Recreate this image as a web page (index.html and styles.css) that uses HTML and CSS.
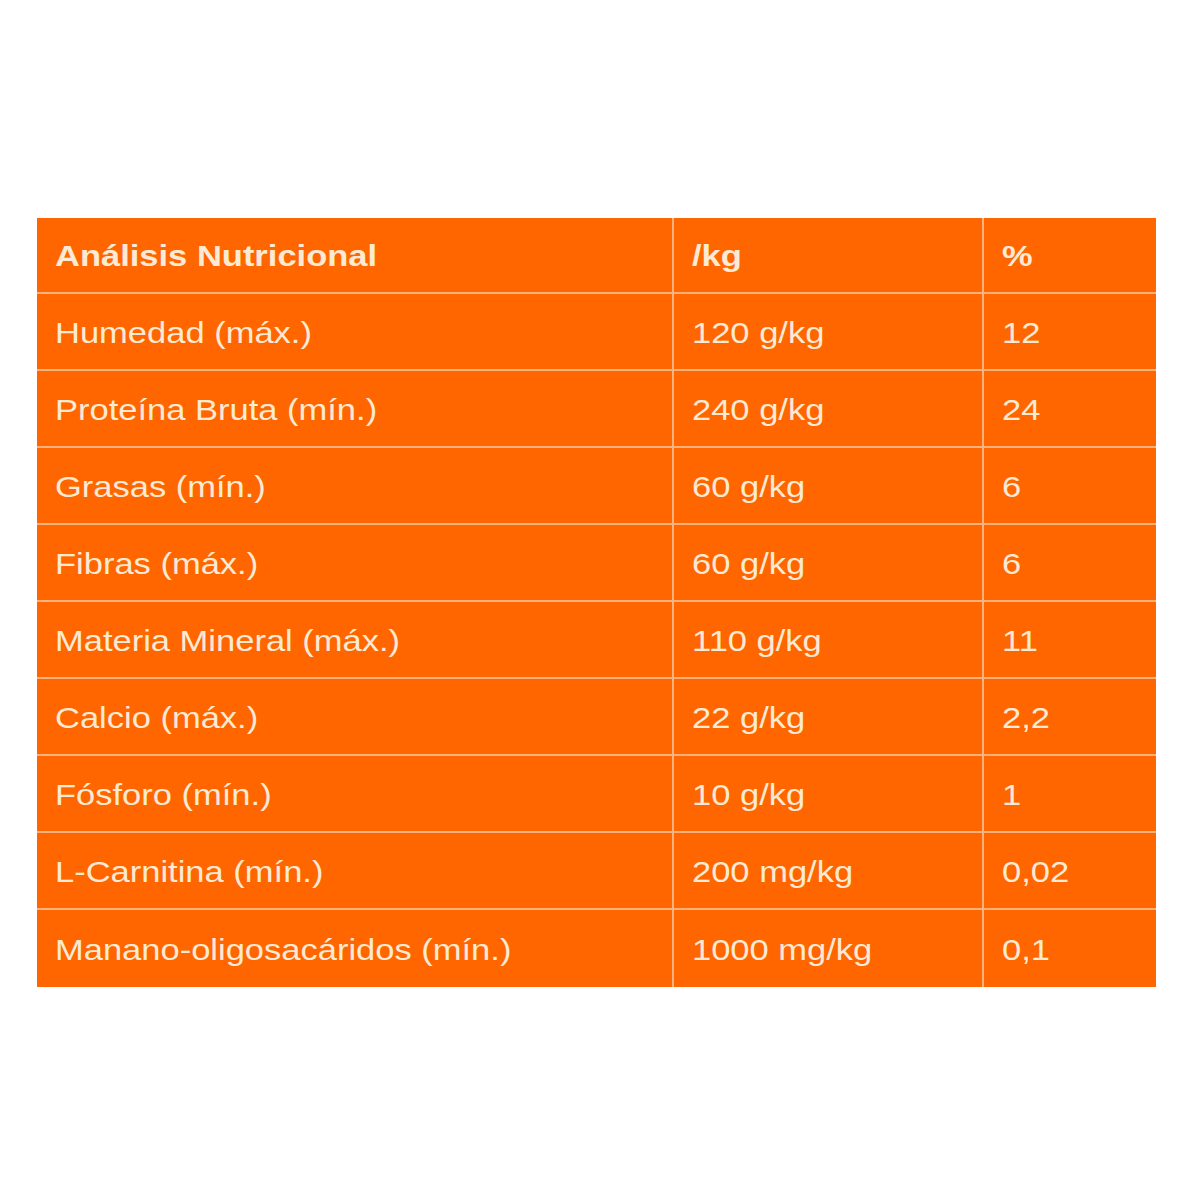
FILE: index.html
```html
<!DOCTYPE html>
<html lang="es">
<head>
<meta charset="utf-8">
<link rel="stylesheet" href="styles.css">
</head>
<body>
<div class="page">
<table class="nutri">
<colgroup><col class="c1"><col class="c2"><col class="c3"></colgroup>
<thead>
<tr><th><span>Análisis Nutricional</span></th><th><span>/kg</span></th><th><span>%</span></th></tr>
</thead>
<tbody>
<tr><td><span>Humedad (máx.)</span></td><td><span>120 g/kg</span></td><td><span>12</span></td></tr>
<tr><td><span>Proteína Bruta (mín.)</span></td><td><span>240 g/kg</span></td><td><span>24</span></td></tr>
<tr><td><span>Grasas (mín.)</span></td><td><span>60 g/kg</span></td><td><span>6</span></td></tr>
<tr><td><span>Fibras (máx.)</span></td><td><span>60 g/kg</span></td><td><span>6</span></td></tr>
<tr><td><span>Materia Mineral (máx.)</span></td><td><span>110 g/kg</span></td><td><span>11</span></td></tr>
<tr><td><span>Calcio (máx.)</span></td><td><span>22 g/kg</span></td><td><span>2,2</span></td></tr>
<tr><td><span>Fósforo (mín.)</span></td><td><span>10 g/kg</span></td><td><span>1</span></td></tr>
<tr><td><span>L-Carnitina (mín.)</span></td><td><span>200 mg/kg</span></td><td><span>0,02</span></td></tr>
<tr><td><span>Manano-oligosacáridos (mín.)</span></td><td><span>1000 mg/kg</span></td><td><span>0,1</span></td></tr>
</tbody>
</table>
</div>
</body>
</html>
```
FILE: styles.css
```css
html, body {
  margin: 0;
  background: #ffffff;
}
.page {
  width: 1200px;
  height: 1200px;
  padding: 218px 0 0 37px;
  box-sizing: border-box;
}
.nutri {
  width: 1119px;
  border-collapse: collapse;
  table-layout: fixed;
  background: #ff6600;
  font-family: "Liberation Sans", Arial, sans-serif;
  font-size: 30px;
  color: #fdead4;
}
.c1 { width: 636px; }
.c2 { width: 310px; }
.c3 { width: 173px; }
.nutri th,
.nutri td {
  height: 77px;
  padding: 2px 0 0 18px;
  box-sizing: border-box;
  text-align: left;
  vertical-align: middle;
  border: 2px solid #fbb27c;
  white-space: nowrap;
}
.nutri th span,
.nutri td span {
  display: inline-block;
  transform: scaleX(1.15);
  transform-origin: left center;
}
.nutri th {
  height: 75px;
  padding-top: 2px;
  font-weight: bold;
  border-top: none;
}
.nutri tr > :first-child { border-left: none; }
.nutri tr > :last-child { border-right: none; }
.nutri tbody tr:last-child td {
  height: 78px;
  border-bottom: none;
}
```
